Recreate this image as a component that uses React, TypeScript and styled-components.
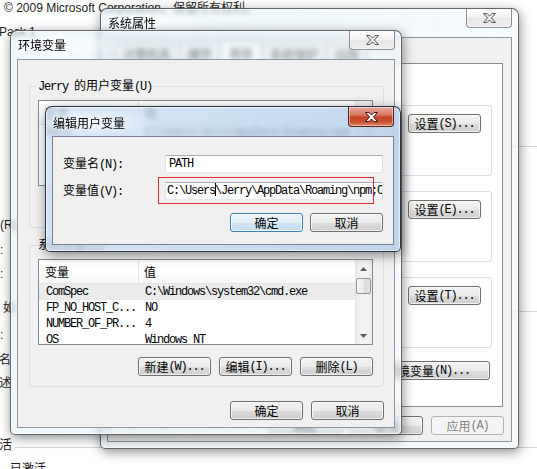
import React from "react";
import styled, { createGlobalStyle, css } from "styled-components";

const CJK = `"Noto Sans CJK SC", "Noto Sans", sans-serif`;
const SANS = `"Liberation Sans", "Noto Sans CJK SC", sans-serif`;
const MONO = `"Liberation Mono", "Noto Sans CJK SC", monospace`;

const GlobalStyle = createGlobalStyle`
  html, body { margin: 0; padding: 0; background: #ffffff; }
  body { overflow: hidden; }
`;

const Desktop = styled.div`
  position: relative;
  width: 537px;
  height: 469px;
  overflow: hidden;
  background: #ffffff;
  color: #000;
  font-family: ${CJK};
  font-size: 12px;
`;

/* ---------- page behind the dialogs ---------- */
const BackPage = styled.div`
  display: flex;
  flex-direction: column;
  font-family: ${SANS};
  color: #1e1e1e;
`;
const BackLine = styled.div<{ $mt?: number; $size?: number }>`
  display: flex;
  align-items: center;
  height: 16px;
  line-height: 16px;
  margin-top: ${(p) => p.$mt ?? 0}px;
  font-size: ${(p) => p.$size ?? 12}px;
  white-space: nowrap;
`;
const BackText = styled.span<{ $ml?: number }>`
  flex: none;
  margin-left: ${(p) => p.$ml ?? 0}px;
`;
const BackRule = styled.span<{ $ml: number; $dy?: number }>`
  flex: 1;
  height: 1px;
  margin-left: ${(p) => p.$ml}px;
  margin-top: ${(p) => (p.$dy ?? 0) * 2}px;
  background: #d4d4d4;
`;

/* ---------- window chrome ---------- */
const Frame = styled.section<{ $x: number; $y: number; $w: number; $h: number; $active?: boolean }>`
  position: absolute;
  left: ${(p) => p.$x}px;
  top: ${(p) => p.$y}px;
  width: ${(p) => p.$w}px;
  height: ${(p) => p.$h}px;
  box-sizing: border-box;
  display: flex;
  flex-direction: column;
  padding: 0 6px 6px;
  border: 1px solid ${(p) => (p.$active ? "rgba(22, 34, 50, 0.9)" : "rgba(50, 55, 60, 0.75)")};
  border-radius: 7px 7px 5px 5px;
  background: ${(p) =>
    p.$active
      ? "linear-gradient(90deg, rgba(205,224,244,0.78), rgba(180,207,236,0.8))"
      : "linear-gradient(90deg, rgba(224,240,249,0.5), rgba(236,246,251,0.55))"};
  backdrop-filter: blur(2.5px);
  box-shadow: inset 0 0 0 1px rgba(255, 255, 255, 0.6), 1px 3px 12px rgba(0, 0, 0, 0.45);
`;
const TitleBar = styled.div<{ $h: number }>`
  flex: none;
  height: ${(p) => p.$h}px;
  display: flex;
  align-items: flex-start;
  justify-content: space-between;
  background: radial-gradient(ellipse 70px 13px at 38px 15px, rgba(255, 255, 255, 0.8), rgba(255, 255, 255, 0));
`;
const Title = styled.h1<{ $pt: number }>`
  margin: 0;
  padding: ${(p) => p.$pt}px 0 0 1px;
  font: 400 12px/16px ${CJK};
  color: #000;
  white-space: nowrap;
`;
const CloseBtn = styled.div<{ $active?: boolean }>`
  flex: none;
  width: 46px;
  height: ${(p) => (p.$active ? 20 : 19)}px;
  box-sizing: border-box;
  display: flex;
  align-items: center;
  justify-content: center;
  border: 1px solid ${(p) => (p.$active ? "#5a1d12" : "rgba(70,70,70,0.6)")};
  border-top: none;
  border-radius: 0 0 4px 4px;
  background: ${(p) =>
    p.$active
      ? "linear-gradient(#e9ab9c 0%, #d77a63 40%, #c4452b 55%, #c9502f 78%, #de8a6c 100%)"
      : "linear-gradient(#fdfdfd 0%, #f1f1f1 50%, #e6e6e6 51%, #eeeeee 100%)"};
  box-shadow: inset 0 0 0 1px rgba(255, 255, 255, 0.45);
`;
const Client = styled.div<{ $active?: boolean }>`
  flex: 1;
  min-height: 0;
  box-sizing: border-box;
  display: flex;
  flex-direction: column;
  background: #f0f0f0;
  border: 1px solid ${(p) => (p.$active ? "rgba(40,60,90,0.6)" : "rgba(70,75,80,0.55)")};
`;

const XGlyph = ({ active }: { active?: boolean }) => (
  <svg width="13" height="10" viewBox="0 0 13 10">
    <path
      d="M0.5 0.5h3.5l2.5 2.5 2.5-2.5h3.5l-4 4.5 4 4.5h-3.5l-2.5-2.5-2.5 2.5h-3.5l4-4.5z"
      fill={active ? "#ffffff" : "#e4e4e4"}
      stroke={active ? "#40150d" : "#5a5a5a"}
      strokeWidth="1"
      strokeLinejoin="round"
    />
  </svg>
);

type WinProps = {
  x: number;
  y: number;
  w: number;
  h: number;
  title: string;
  active?: boolean;
  titleH: number;
  titlePad: number;
  children: React.ReactNode;
};
const Win = ({ x, y, w, h, title, active, titleH, titlePad, children }: WinProps) => (
  <Frame $x={x} $y={y} $w={w} $h={h} $active={active}>
    <TitleBar $h={titleH}>
      <Title $pt={titlePad}>{title}</Title>
      <CloseBtn $active={active}>
        <XGlyph active={active} />
      </CloseBtn>
    </TitleBar>
    <Client $active={active}>{children}</Client>
  </Frame>
);

/* ---------- common controls ---------- */
const M = styled.span`
  font-family: ${MONO};
  letter-spacing: -1.2px;
`;
const Btn = styled.button<{ $w?: number; $kind?: "default" | "disabled" }>`
  flex: none;
  box-sizing: border-box;
  width: ${(p) => p.$w ?? 73}px;
  height: 19px;
  margin: 0;
  padding: 0;
  display: inline-flex;
  align-items: center;
  justify-content: center;
  font: 400 12px/16px ${CJK};
  color: #000;
  white-space: nowrap;
  border: 1px solid #707070;
  border-radius: 3px;
  background: linear-gradient(#f2f2f2 0%, #ebebeb 50%, #dddddd 51%, #cfcfcf 100%);
  box-shadow: inset 0 0 0 1px rgba(255, 255, 255, 0.7);
  ${(p) =>
    p.$kind === "default" &&
    css`
      border-color: #3c7fb1;
      background: linear-gradient(#eef5fb 0%, #e2eef8 50%, #d1e4f3 51%, #c5dcef 100%);
    `}
  ${(p) =>
    p.$kind === "disabled" &&
    css`
      border-color: #adb2b5;
      background: #f4f4f4;
      color: #838383;
      box-shadow: none;
    `}
`;
const BtnRow = styled.div<{ $gap: number; $mt?: number }>`
  display: flex;
  justify-content: flex-end;
  gap: ${(p) => p.$gap}px;
  margin-top: ${(p) => p.$mt ?? 0}px;
`;
const Group = styled.fieldset<{ $h?: number; $pad: string }>`
  margin: 0;
  min-width: 0;
  box-sizing: border-box;
  display: flex;
  flex-direction: column;
  height: ${(p) => (p.$h ? `${p.$h}px` : "auto")};
  padding: ${(p) => p.$pad};
  border: 1px solid #d5dfe5;
  border-radius: 3px;
`;
const Legend = styled.legend`
  padding: 0 1px;
  margin-left: -1px;
  font: 400 12px/14px ${CJK};
  color: #000;
  white-space: nowrap;
`;

/* ---------- System Properties ---------- */
const TabStrip = styled.div`
  flex: none;
  height: 25px;
  box-sizing: border-box;
  display: flex;
  align-items: flex-end;
  padding-left: 6px;
`;
const Tab = styled.div<{ $sel?: boolean }>`
  position: relative;
  z-index: ${(p) => (p.$sel ? 1 : 0)};
  height: ${(p) => (p.$sel ? 23 : 20)}px;
  margin-bottom: ${(p) => (p.$sel ? -1 : 0)}px;
  margin-right: -1px;
  padding: 0 8px;
  box-sizing: border-box;
  border: 1px solid #898c95;
  border-bottom: none;
  border-radius: 2px 2px 0 0;
  line-height: ${(p) => (p.$sel ? 21 : 19)}px;
  background: ${(p) => (p.$sel ? "#ffffff" : "linear-gradient(#f3f3f3, #e3e3e3)")};
`;
const TabPanel = styled.div`
  flex: none;
  height: 344px;
  box-sizing: border-box;
  margin: 0 8px 0 5px;
  padding: 34px 10px 0;
  display: flex;
  flex-direction: column;
  gap: 8px;
  background: #ffffff;
  border: 1px solid #898c95;
`;
const GroupBtn = styled(Btn)`
  margin-top: auto;
  align-self: flex-end;
`;
const EnvVarBtn = styled(Btn)`
  align-self: flex-end;
  margin: 5px 2px 0 0;
`;
const SysButtons = styled(BtnRow)`
  padding: 9px 7px 0 0;
`;

/* ---------- Environment Variables ---------- */
const EnvBody = styled.div`
  display: flex;
  flex-direction: column;
  gap: 9px;
  padding: 18px 10px 0 11px;
`;
const ListView = styled.div`
  flex: none;
  height: 86px;
  box-sizing: border-box;
  display: flex;
  border: 1px solid #828790;
  background: #ffffff;
`;
const ListMain = styled.div`
  flex: 1;
  min-width: 0;
  overflow: hidden;
  display: flex;
  flex-direction: column;
`;
const Header = styled.div`
  flex: none;
  height: 24px;
  box-sizing: border-box;
  display: flex;
  border-bottom: 1px solid #e5e5e5;
  background: linear-gradient(#ffffff 0%, #ffffff 55%, #f6f7f9 100%);
`;
const HeadCell = styled.div<{ $w?: number }>`
  box-sizing: border-box;
  ${(p) => (p.$w ? `width: ${p.$w}px; flex: none; border-right: 1px solid #e5e5e5;` : "flex: 1;")}
  padding-left: ${(p) => (p.$w ? 6 : 5)}px;
  line-height: 23px;
`;
const Row = styled.div<{ $sel?: boolean }>`
  flex: none;
  display: flex;
  height: 16px;
  line-height: 16px;
  white-space: nowrap;
  background: ${(p) => (p.$sel ? "#ebebeb" : "transparent")};
  font-family: ${MONO};
  letter-spacing: -1.2px;
`;
const Cell = styled.div<{ $w?: number }>`
  box-sizing: border-box;
  overflow: hidden;
  ${(p) => (p.$w ? `width: ${p.$w}px; flex: none; padding-left: 7px;` : "flex: 1; padding-left: 6px;")}
`;
const ScrollBar = styled.div`
  flex: none;
  width: 17px;
  display: flex;
  flex-direction: column;
  background: linear-gradient(90deg, #e6e6e6 0%, #f3f3f3 30%, #f3f3f3 70%, #ebebeb 100%);
`;
const ScrollArrow = styled.div`
  flex: none;
  height: 17px;
  display: flex;
  align-items: center;
  justify-content: center;
`;
const Thumb = styled.div`
  flex: none;
  height: 16px;
  margin: 1px 1px 0;
  box-sizing: border-box;
  border: 1px solid #959595;
  border-radius: 2px;
  background: linear-gradient(90deg, #f5f5f5 0%, #ececec 50%, #dcdcdc 51%, #e2e2e2 100%);
`;
const Spacer = styled.div`
  flex: 1;
`;

const Arrow = ({ down }: { down?: boolean }) => (
  <svg width="7" height="4" viewBox="0 0 7 4">
    <path d={down ? "M0 0h7L3.5 4z" : "M0 4h7L3.5 0z"} fill="#5a5a5a" />
  </svg>
);

type Var = { name: string; value: string; sel?: boolean };
const VarList = ({ rows }: { rows: Var[] }) => (
  <ListView>
    <ListMain>
      <Header>
        <HeadCell $w={100}>变量</HeadCell>
        <HeadCell>值</HeadCell>
      </Header>
      {rows.map((r) => (
        <Row key={r.name} $sel={r.sel}>
          <Cell $w={100}>{r.name}</Cell>
          <Cell>{r.value}</Cell>
        </Row>
      ))}
    </ListMain>
    <ScrollBar>
      <ScrollArrow>
        <Arrow />
      </ScrollArrow>
      <Thumb />
      <Spacer />
      <ScrollArrow>
        <Arrow down />
      </ScrollArrow>
    </ScrollBar>
  </ListView>
);

const VarGroup = ({ legend, rows }: { legend: React.ReactNode; rows: Var[] }) => (
  <Group $pad="6px 10px 10px 8px">
    <Legend>{legend}</Legend>
    <VarList rows={rows} />
    <BtnRow $gap={8} $mt={12}>
      <Btn>
        新建<M>(W)...</M>
      </Btn>
      <Btn>
        编辑<M>(I)...</M>
      </Btn>
      <Btn>
        删除<M>(L)</M>
      </Btn>
    </BtnRow>
  </Group>
);

const EnvButtons = styled(BtnRow)`
  margin-top: 5px;
`;

/* ---------- Edit User Variable ---------- */
const EditBody = styled.div`
  display: flex;
  flex-direction: column;
  align-items: flex-start;
  padding: 18px 0 0 10px;
`;
const FieldGrid = styled.div`
  display: grid;
  grid-template-columns: 102px 218px;
  row-gap: 9px;
  align-items: center;
`;
const Label = styled.label`
  line-height: 16px;
  white-space: nowrap;
`;
const TextBox = styled.div<{ $pl: number }>`
  box-sizing: border-box;
  height: 18px;
  overflow: hidden;
  white-space: nowrap;
  padding-left: ${(p) => p.$pl}px;
  line-height: 16px;
  border: 1px solid;
  border-color: #abadb3 #dbdfe6 #e3e9ef #e2e3ea;
  background: #ffffff;
  font-family: ${MONO};
  letter-spacing: -1.2px;
`;
const Caret = styled.span`
  display: inline-block;
  width: 1px;
  height: 13px;
  margin-right: -1px;
  vertical-align: -2px;
  background: #000;
`;
const EditButtons = styled(BtnRow)`
  width: 320px;
  margin-top: 13px;
`;

const Annotation = styled.div`
  position: absolute;
  left: 158px;
  top: 177px;
  width: 216px;
  height: 27px;
  box-sizing: border-box;
  border: 1px solid #e8282e;
  pointer-events: none;
`;

const userVars: Var[] = [{ name: "PATH", value: "C:\\Users\\Jerry\\AppData\\Roaming\\npm" }];
const sysVars: Var[] = [
  { name: "ComSpec", value: "C:\\Windows\\system32\\cmd.exe", sel: true },
  { name: "FP_NO_HOST_C...", value: "NO" },
  { name: "NUMBER_OF_PR...", value: "4" },
  { name: "OS", value: "Windows_NT" },
];

export default function App() {
  return (
    <Desktop>
      <GlobalStyle />
      <BackPage>
        <BackLine>
          <BackText $ml={4}>© 2009 Microsoft Corporation。保留所有权利。</BackText>
        </BackLine>
        <BackLine $mt={8}>
          <BackText $ml={-1}>Pack 1</BackText>
        </BackLine>
        <BackLine $mt={98}>
          <BackRule $ml={300} />
        </BackLine>
        <BackLine $mt={63}>
          <BackText>(R)</BackText>
        </BackLine>
        <BackLine $mt={9}>
          <BackText>:</BackText>
        </BackLine>
        <BackLine $mt={8}>
          <BackText>:</BackText>
        </BackLine>
        <BackLine $mt={18}>
          <BackText $ml={3}>如</BackText>
          <BackRule $ml={285} $dy={3} />
        </BackLine>
        <BackLine $mt={11}>
          <BackText>:</BackText>
        </BackLine>
        <BackLine $mt={9}>
          <BackText $ml={-1}>名</BackText>
        </BackLine>
        <BackLine $mt={7}>
          <BackText $ml={-1}>述</BackText>
        </BackLine>
        <BackLine $mt={46} $size={13}>
          <BackText $ml={-1}>活</BackText>
          <BackRule $ml={3} $dy={2} />
        </BackLine>
        <BackLine $mt={8}>
          <BackText $ml={10}>已激活</BackText>
        </BackLine>
      </BackPage>

      <Win x={100} y={8} w={419} h={441} title="系统属性" titleH={28} titlePad={6}>
        <TabStrip>
          <Tab>计算机名</Tab>
          <Tab>硬件</Tab>
          <Tab $sel>高级</Tab>
          <Tab>系统保护</Tab>
          <Tab>远程</Tab>
        </TabStrip>
        <TabPanel>
          <Group $h={78} $pad="2px 10px 8px 10px">
            <Legend>性能</Legend>
            <GroupBtn>
              设置<M>(S)...</M>
            </GroupBtn>
          </Group>
          <Group $h={78} $pad="2px 10px 8px 10px">
            <Legend>用户配置文件</Legend>
            <GroupBtn>
              设置<M>(E)...</M>
            </GroupBtn>
          </Group>
          <Group $h={78} $pad="2px 10px 8px 10px">
            <Legend>启动和故障恢复</Legend>
            <GroupBtn>
              设置<M>(T)...</M>
            </GroupBtn>
          </Group>
          <EnvVarBtn $w={124}>
            环境变量<M>(N)...</M>
          </EnvVarBtn>
        </TabPanel>
        <SysButtons $gap={8}>
          <Btn>确定</Btn>
          <Btn>取消</Btn>
          <Btn $kind="disabled">
            应用<M>(A)</M>
          </Btn>
        </SysButtons>
      </Win>

      <Win x={10} y={30} w={392} h={405} title="环境变量" titleH={28} titlePad={6}>
        <EnvBody>
          <VarGroup
            legend={
              <>
                <M>Jerry </M>的用户变量<M>(U)</M>
              </>
            }
            rows={userVars}
          />
          <VarGroup
            legend={
              <>
                系统变量<M>(S)</M>
              </>
            }
            rows={sysVars}
          />
          <EnvButtons $gap={8}>
            <Btn>确定</Btn>
            <Btn>取消</Btn>
          </EnvButtons>
        </EnvBody>
      </Win>

      <Win x={45} y={106} w={356} h={146} title="编辑用户变量" titleH={29} titlePad={8} active>
        <EditBody>
          <FieldGrid>
            <Label>
              变量名<M>(N):</M>
            </Label>
            <TextBox $pl={3}>PATH</TextBox>
            <Label>
              变量值<M>(V):</M>
            </Label>
            <TextBox $pl={1}>
              C:\Users
              <Caret />
              \Jerry\AppData\Roaming\npm;C:\Program Files\nodejs
            </TextBox>
          </FieldGrid>
          <EditButtons $gap={7}>
            <Btn $kind="default">确定</Btn>
            <Btn>取消</Btn>
          </EditButtons>
        </EditBody>
      </Win>

      <Annotation />
    </Desktop>
  );
}
